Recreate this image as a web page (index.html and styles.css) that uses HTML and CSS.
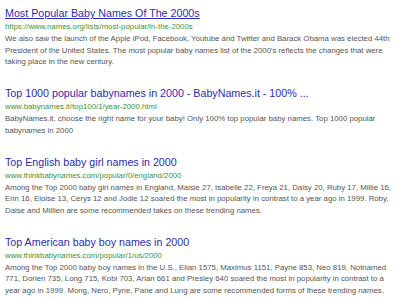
FILE: index.html
```html
<!DOCTYPE html>
<html lang="en">
<head>
    <meta charset="UTF-8">
    <meta name="viewport" content="width=device-width, initial-scale=1.0">
    <title>Baby names in 2000 - Search</title>
    <link rel="stylesheet" href="styles.css">
</head>
<body>
    <div class="results">
        <div class="result">
            <a class="result-title visited" href="#">Most Popular Baby Names Of The 2000s</a>
            <div class="result-url">https://www.names.org/lists/most-popular/in-the-2000s</div>
            <p class="result-desc">We also saw the launch of the Apple iPod, Facebook, Youtube and Twitter and Barack Obama was elected 44th President of the United States. The most popular baby names list of the 2000's reflects the changes that were taking place in the new century.</p>
        </div>
        <div class="result">
            <a class="result-title" href="#">Top 1000 popular babynames in 2000 - BabyNames.it - 100% ...</a>
            <div class="result-url">www.babynames.it/top100/1/year-2000.html</div>
            <p class="result-desc">BabyNames.it, choose the right name for your baby! Only 100% top popular baby names. Top 1000 popular babynames in 2000</p>
        </div>
        <div class="result">
            <a class="result-title" href="#">Top English baby girl names in 2000</a>
            <div class="result-url">www.thinkbabynames.com/popular/0/england/2000</div>
            <p class="result-desc">Among the Top 2000 baby girl names in England, Maisie 27, Isabelle 22, Freya 21, Daisy 20, Ruby 17, Millie 16, Erin 16, Eloise 13, Cerys 12 and Jodie 12 soared the most in popularity in contrast to a year ago in 1999. Roby, Daise and Millien are some recommended takes on these trending names.</p>
        </div>
        <div class="result">
            <a class="result-title" href="#">Top American baby boy names in 2000</a>
            <div class="result-url">www.thinkbabynames.com/popular/1/us/2000</div>
            <p class="result-desc">Among the Top 2000 baby boy names in the U.S., Elian 1575, Maximus 1151, Payne 853, Neo 819, Notnamed 771, Dorien 735, Long 715, Kobi 703, Arian 661 and Presley 640 soared the most in popularity in contrast to a year ago in 1999. Mong, Nero, Pyne, Pane and Lung are some recommended forms of these trending names.</p>
        </div>
    </div>
</body>
</html>
```

FILE: styles.css
```css
body {
    margin: 0;
    padding: 5px 3px 0 5px;
    background-color: #fff;
    font-family: Arial, "Liberation Sans", sans-serif;
}
.result {
    margin-bottom: 17.5px;
}
.result-title {
    display: block;
    font-size: 10.7px;
    line-height: 16px;
    color: #2a2ac0;
    text-decoration: none;
    white-space: nowrap;
}
.result-title.visited {
    text-decoration: underline;
}
.result-url {
    font-size: 7.8px;
    line-height: 12px;
    color: #3a943a;
    white-space: nowrap;
}
.result-desc {
    margin: 0;
    font-size: 7.8px;
    line-height: 11.5px;
    color: #555;
}
```
